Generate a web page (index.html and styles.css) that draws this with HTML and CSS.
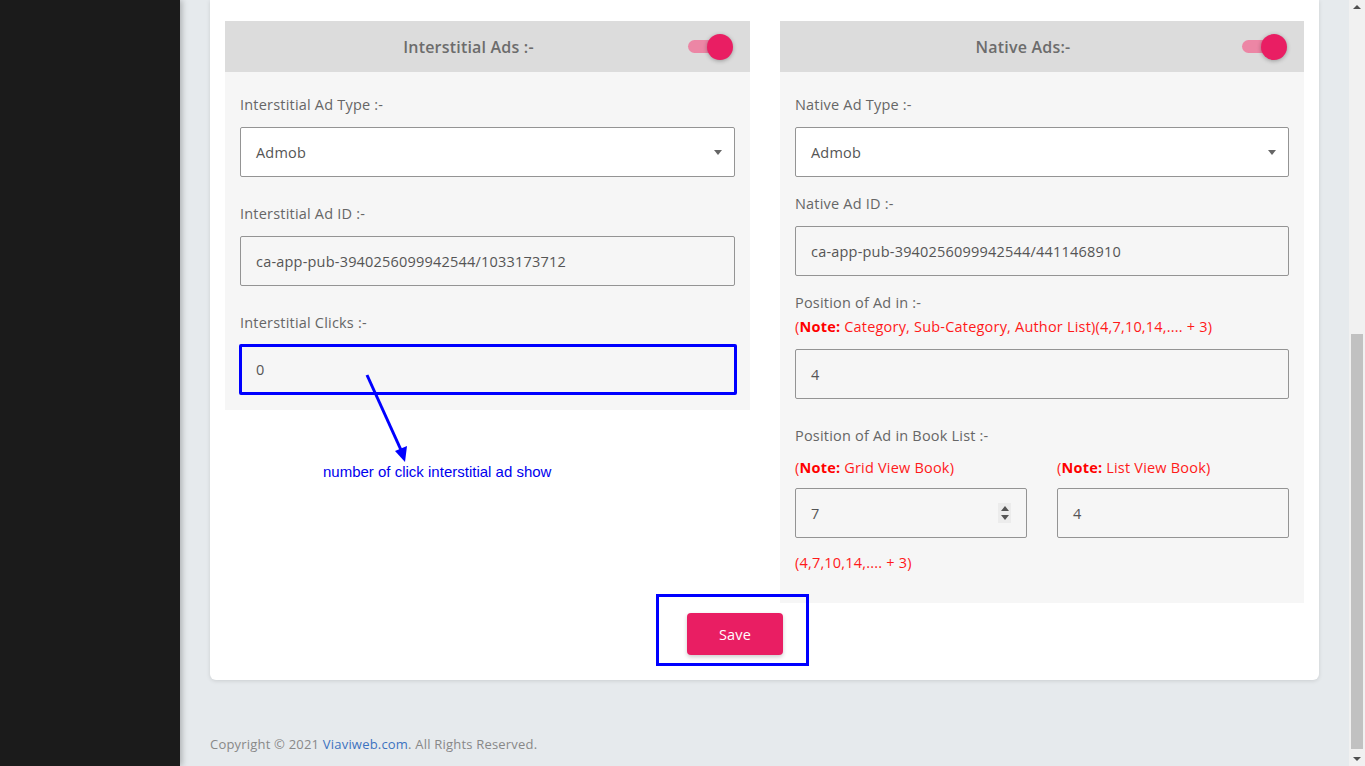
FILE: index.html
```html
<!DOCTYPE html>
<html lang="en">
<head>
<meta charset="utf-8">
<title>Ads Settings</title>
<link rel="stylesheet" href="styles.css">
</head>
<body>
<aside class="sidebar"></aside>
<main class="main">
  <section class="card">
    <div class="panels">
      <div class="panel panel-left">
        <div class="panel-head">
          <h3 class="panel-title">Interstitial Ads :-</h3>
          <span class="toggle"><span class="knob"></span></span>
        </div>
        <div class="panel-body">
          <div class="group first">
            <label class="label">Interstitial Ad Type :-</label>
            <div class="field select">
              <span>Admob</span>
              <svg class="caret" width="8" height="5" viewBox="0 0 8 5"><path d="M0 0h8L4 5z" fill="#666"/></svg>
            </div>
          </div>
          <div class="group wide">
            <label class="label">Interstitial Ad ID :-</label>
            <div class="field">ca-app-pub-3940256099942544/1033173712</div>
          </div>
          <div class="group wide">
            <label class="label">Interstitial Clicks :-</label>
            <div class="field marked">0</div>
          </div>
        </div>
      </div>

      <div class="panel panel-right">
        <div class="panel-head">
          <h3 class="panel-title">Native Ads:-</h3>
          <span class="toggle"><span class="knob"></span></span>
        </div>
        <div class="panel-body">
          <div class="group first">
            <label class="label">Native Ad Type :-</label>
            <div class="field select">
              <span>Admob</span>
              <svg class="caret" width="8" height="5" viewBox="0 0 8 5"><path d="M0 0h8L4 5z" fill="#666"/></svg>
            </div>
          </div>
          <div class="group">
            <label class="label">Native Ad ID :-</label>
            <div class="field">ca-app-pub-3940256099942544/4411468910</div>
          </div>
          <div class="group">
            <label class="label">Position of Ad in :-</label>
            <p class="note note-top">(<b>Note:</b> Category, Sub-Category, Author List)(4,7,10,14,.... + 3)</p>
            <div class="field">4</div>
          </div>
          <div class="group wide">
            <label class="label">Position of Ad in Book List :-</label>
            <div class="cols">
              <div class="col">
                <p class="note note-col">(<b>Note:</b> Grid View Book)</p>
                <div class="field number">
                  <span>7</span>
                  <span class="spin"><svg width="8" height="14" viewBox="0 0 8 14"><path d="M0 5L4 0L8 5z M0 9h8L4 14z" fill="#555"/></svg></span>
                </div>
              </div>
              <div class="col">
                <p class="note note-col">(<b>Note:</b> List View Book)</p>
                <div class="field">4</div>
              </div>
            </div>
            <p class="note note-foot">(4,7,10,14,.... + 3)</p>
          </div>
        </div>
      </div>
    </div>

    <div class="actions">
      <button class="btn-save" type="button">Save</button>
      <span class="mark-box"></span>
    </div>

    <div class="annotation">
      <svg class="arrow" width="60" height="100" viewBox="0 0 60 100">
        <line x1="4" y1="3" x2="38" y2="78" stroke="#0000ff" stroke-width="3"/>
        <path d="M32 79 L44 74 L42 90 Z" fill="#0000ff"/>
      </svg>
      <span class="annot-text">number of click interstitial ad show</span>
    </div>
  </section>

  <footer class="footer">Copyright © 2021 <a href="#">Viaviweb.com</a>. All Rights Reserved.</footer>
</main>
<div class="scrollbar">
  <svg class="sb-arrow" width="8" height="4" viewBox="0 0 8 4"><path d="M0 4L4 0L8 4z" fill="#505050"/></svg>
  <div class="sb-track"><div class="sb-thumb"></div></div>
  <svg class="sb-arrow" width="8" height="4" viewBox="0 0 8 4"><path d="M0 0h8L4 4z" fill="#505050"/></svg>
</div>
</body>
</html>
```

FILE: styles.css
```css
* { box-sizing: border-box; }

html, body {
  margin: 0;
  height: 766px;
  overflow: hidden;
}

body {
  display: flex;
  font-family: "Open Sans", "DejaVu Sans", sans-serif;
  color: #666;
  font-size: 14.5px;
  letter-spacing: 0.2px;
}

.sidebar {
  width: 180px;
  flex: none;
  background: #1b1b1b;
  box-shadow: 2px 0 6px rgba(0, 0, 0, 0.25);
  position: relative;
  z-index: 2;
}

.main {
  flex: 1;
  background: #e6eaed;
  padding: 0 30px;
  display: flex;
  flex-direction: column;
}

.card {
  position: relative;
  background: #fff;
  border-radius: 0 0 6px 6px;
  box-shadow: 0 1px 4px rgba(0, 0, 0, 0.12);
  padding: 21px 15px 25px;
}

.panels {
  display: grid;
  grid-template-columns: 525px 524px;
  column-gap: 30px;
  align-items: start;
}

.panel { background: #f6f6f6; }

.panel-head {
  height: 51px;
  background: #dcdcdc;
  display: flex;
  align-items: center;
  padding: 0 17px 0 24px;
}

.panel-title {
  flex: 1;
  margin: 0;
  text-align: center;
  font-size: 16px;
  font-weight: 600;
  color: #6c6c6c;
}

.toggle {
  position: relative;
  width: 45px;
  height: 13px;
  flex: none;
  display: flex;
  align-items: center;
  justify-content: flex-end;
}

.toggle::before {
  content: "";
  position: absolute;
  left: 0;
  top: 0;
  width: 36px;
  height: 13px;
  border-radius: 7px;
  background: #ec86a5;
}

.knob {
  position: relative;
  width: 26px;
  height: 26px;
  border-radius: 50%;
  background: #e91e63;
  box-shadow: 0 1px 4px rgba(0, 0, 0, 0.3);
}

.panel-body { padding: 0 15px 15px; }

.panel-right .panel-body { padding-bottom: 30px; }

.group { margin-top: 17px; }
.group.wide { margin-top: 27px; }
.group.first { margin-top: 23px; }

.label {
  display: block;
  line-height: 20px;
  color: #666;
  margin-bottom: 12px;
}

.field {
  height: 50px;
  border: 1px solid #949494;
  border-radius: 2px;
  padding: 0 15px;
  display: flex;
  align-items: center;
  color: #555;
  background: #f6f6f6;
}

.field.select {
  background: #fff;
  justify-content: space-between;
  padding-right: 12px;
}

.field.marked {
  border: 3px solid #0000ff;
  height: 51px;
  margin: -1px -2px 0 -1px;
  padding-left: 14px;
}

.field.number {
  justify-content: space-between;
  padding-right: 15px;
}

.spin {
  width: 13px;
  height: 20px;
  background: #ececec;
  display: flex;
  align-items: center;
  justify-content: center;
}

.note {
  margin: 0;
  line-height: 20px;
  color: #ff1a1a;
}

.note b { color: #f00; font-weight: 700; }

.note-top { margin: -8px 0 12px; }
.note-col { margin-bottom: 10px; }
.note-foot { margin-top: 15px; }

.cols {
  display: grid;
  grid-template-columns: 1fr 1fr;
  column-gap: 30px;
}

.actions {
  position: relative;
  display: flex;
  margin-top: 10px;
  padding-left: 462px;
}

.btn-save {
  width: 96px;
  height: 42px;
  border: 0;
  border-radius: 4px;
  background: #e91e63;
  color: #fff;
  font-family: inherit;
  font-size: 14.5px;
  letter-spacing: 0.2px;
  font-weight: 500;
  box-shadow: 0 2px 4px rgba(0, 0, 0, 0.2);
}

.mark-box {
  position: absolute;
  left: 431px;
  top: -19px;
  width: 153px;
  height: 72px;
  border: 3px solid #0000ff;
}

.annotation {
  position: absolute;
  left: 113px;
  top: 372px;
  width: 280px;
  height: 112px;
}

.arrow {
  position: absolute;
  left: 40px;
  top: 0;
}

.annot-text {
  position: absolute;
  left: 0;
  top: 91px;
  font-family: "Liberation Sans", Arial, sans-serif;
  font-size: 15px;
  letter-spacing: 0;
  color: #0000ee;
  white-space: nowrap;
}

.footer {
  margin-top: 54px;
  line-height: 20px;
  font-size: 13px;
  color: #888;
}

.footer a { color: #3d73c0; text-decoration: none; }

.scrollbar {
  width: 16px;
  flex: none;
  background: #f1f1f1;
  display: flex;
  flex-direction: column;
  align-items: center;
}

.sb-arrow { margin: 5px 0; flex: none; }

.sb-track {
  flex: 1;
  width: 100%;
  display: flex;
  flex-direction: column;
  justify-content: flex-end;
  padding: 0 2px 3px;
}

.sb-thumb {
  height: 415px;
  background: #c1c1c1;
}
```
